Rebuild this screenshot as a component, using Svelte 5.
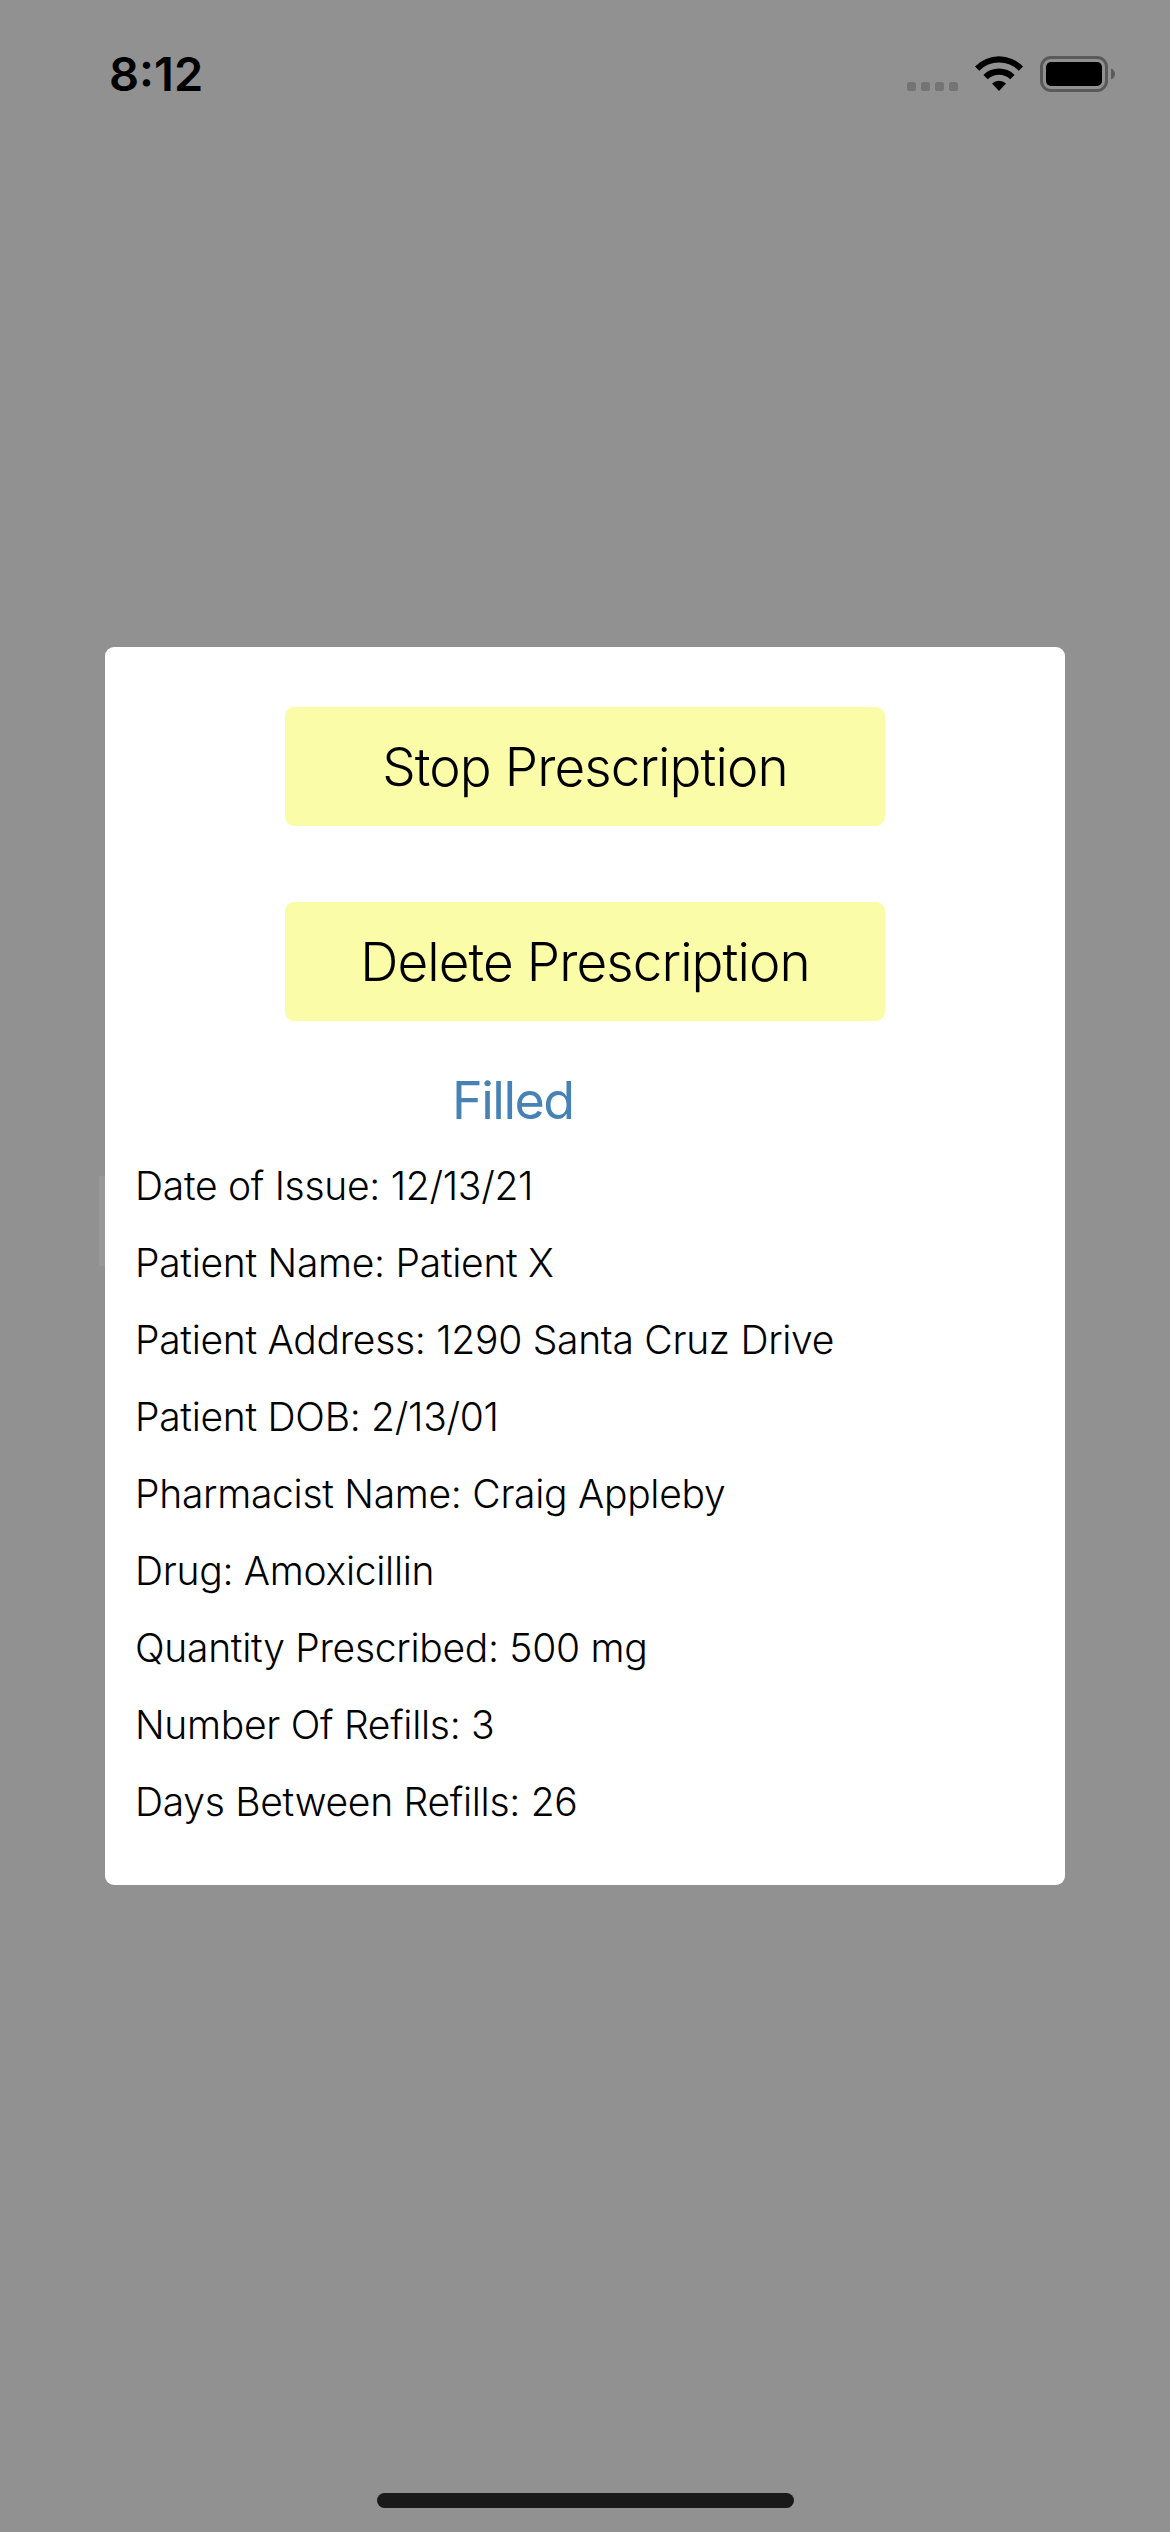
<script>
  const actions = ['Stop Prescription', 'Delete Prescription'];
  const details = [
    ['Date of Issue', '12/13/21'],
    ['Patient Name', 'Patient X'],
    ['Patient Address', '1290 Santa Cruz Drive'],
    ['Patient DOB', '2/13/01'],
    ['Pharmacist Name', 'Craig Appleby'],
    ['Drug', 'Amoxicillin'],
    ['Quantity Prescribed', '500 mg'],
    ['Number Of Refills', '3'],
    ['Days Between Refills', '26']
  ];
</script>

<div class="screen">
  <header class="status">
    <span class="time">8:12</span>
    <svg class="indicators" viewBox="0 0 212 40" width="212" height="40" aria-hidden="true">
      <g fill="#747474">
        <rect x="1" y="28" width="9" height="9" rx="2.6" />
        <rect x="15" y="28" width="9" height="9" rx="2.6" />
        <rect x="29" y="28" width="9" height="9" rx="2.6" />
        <rect x="43" y="28" width="9" height="9" rx="2.6" />
      </g>
      <path d="M69 12.4 A33.5 33.5 0 0 1 117 12.4 L112.7 16.7 A27.6 27.6 0 0 0 73.3 16.7 Z" />
      <path d="M77.4 20.9 A22 22 0 0 1 108.6 20.9 L104.2 25.3 A15.8 15.8 0 0 0 81.8 25.3 Z" />
      <path d="M86 29.4 A10.4 10.4 0 0 1 100 29.4 L93 37 Z" />
      <rect x="135.5" y="3.5" width="65" height="33" rx="9.5" fill="none" stroke="#5a5a5a" stroke-width="3" />
      <rect x="140" y="8" width="56" height="24" rx="5" />
      <path d="M205 14.5 Q209 16.5 209 20 Q209 23.500 205 25.500 Z" fill="#5a5a5a" />
    </svg>
  </header>

  <main class="card">
    {#each actions as label}
      <button class="action">{label}</button>
    {/each}
    <p class="state">Filled</p>
    <ul class="details">
      {#each details as [name, value]}
        <li>{name}: {value}</li>
      {/each}
    </ul>
    <span class="scrollbar"></span>
  </main>

  <div class="home"></div>
</div>

<style>
  :global(body) {
    background: #919191;
  }

  .screen {
    box-sizing: border-box;
    display: flex;
    flex-direction: column;
    align-items: center;
    width: 1170px;
    height: 2532px;
    padding-bottom: 24px;
    background: #919191;
    font-family: Inter, 'Liberation Sans', sans-serif;
    color: #000;
  }

  .status {
    box-sizing: border-box;
    display: flex;
    justify-content: space-between;
    width: 100%;
    height: 647px;
    padding: 54px 52px 0 109px;
  }

  .time {
    height: 40px;
    font-size: 47px;
    font-weight: 600;
    line-height: 40px;
  }

  .card {
    position: relative;
    box-sizing: border-box;
    display: flex;
    flex-direction: column;
    align-items: center;
    width: 960px;
    height: 1238px;
    padding-top: 60px;
    border-radius: 9px;
    background: #fff;
  }

  .action {
    width: 600px;
    height: 119px;
    margin: 0 0 76px;
    padding: 1px 0 0;
    border: 0;
    border-radius: 9px;
    background: #fafca8;
    color: #000;
    font: 300 53px/118px Inter, 'Liberation Sans', sans-serif;
    letter-spacing: -0.9px;
  }

  .action + .action {
    margin-bottom: 46px;
  }

  .state {
    box-sizing: border-box;
    align-self: stretch;
    height: 64px;
    margin: 0;
    padding-left: 347px;
    color: #4682b4;
    font-size: 52px;
    line-height: 67px;
    letter-spacing: -1.5px;
  }

  .details {
    align-self: stretch;
    margin: 16px 0 0;
    padding: 0 30px;
    list-style: none;
    font-size: 39px;
    font-weight: 300;
    line-height: 77px;
    letter-spacing: -0.28px;
    white-space: nowrap;
  }

  .scrollbar {
    position: absolute;
    top: 529px;
    left: -6px;
    width: 6px;
    height: 90px;
    background: #999;
  }

  .home {
    width: 417px;
    height: 15px;
    margin-top: auto;
    border-radius: 8px;
    background: #191919;
  }
</style>
